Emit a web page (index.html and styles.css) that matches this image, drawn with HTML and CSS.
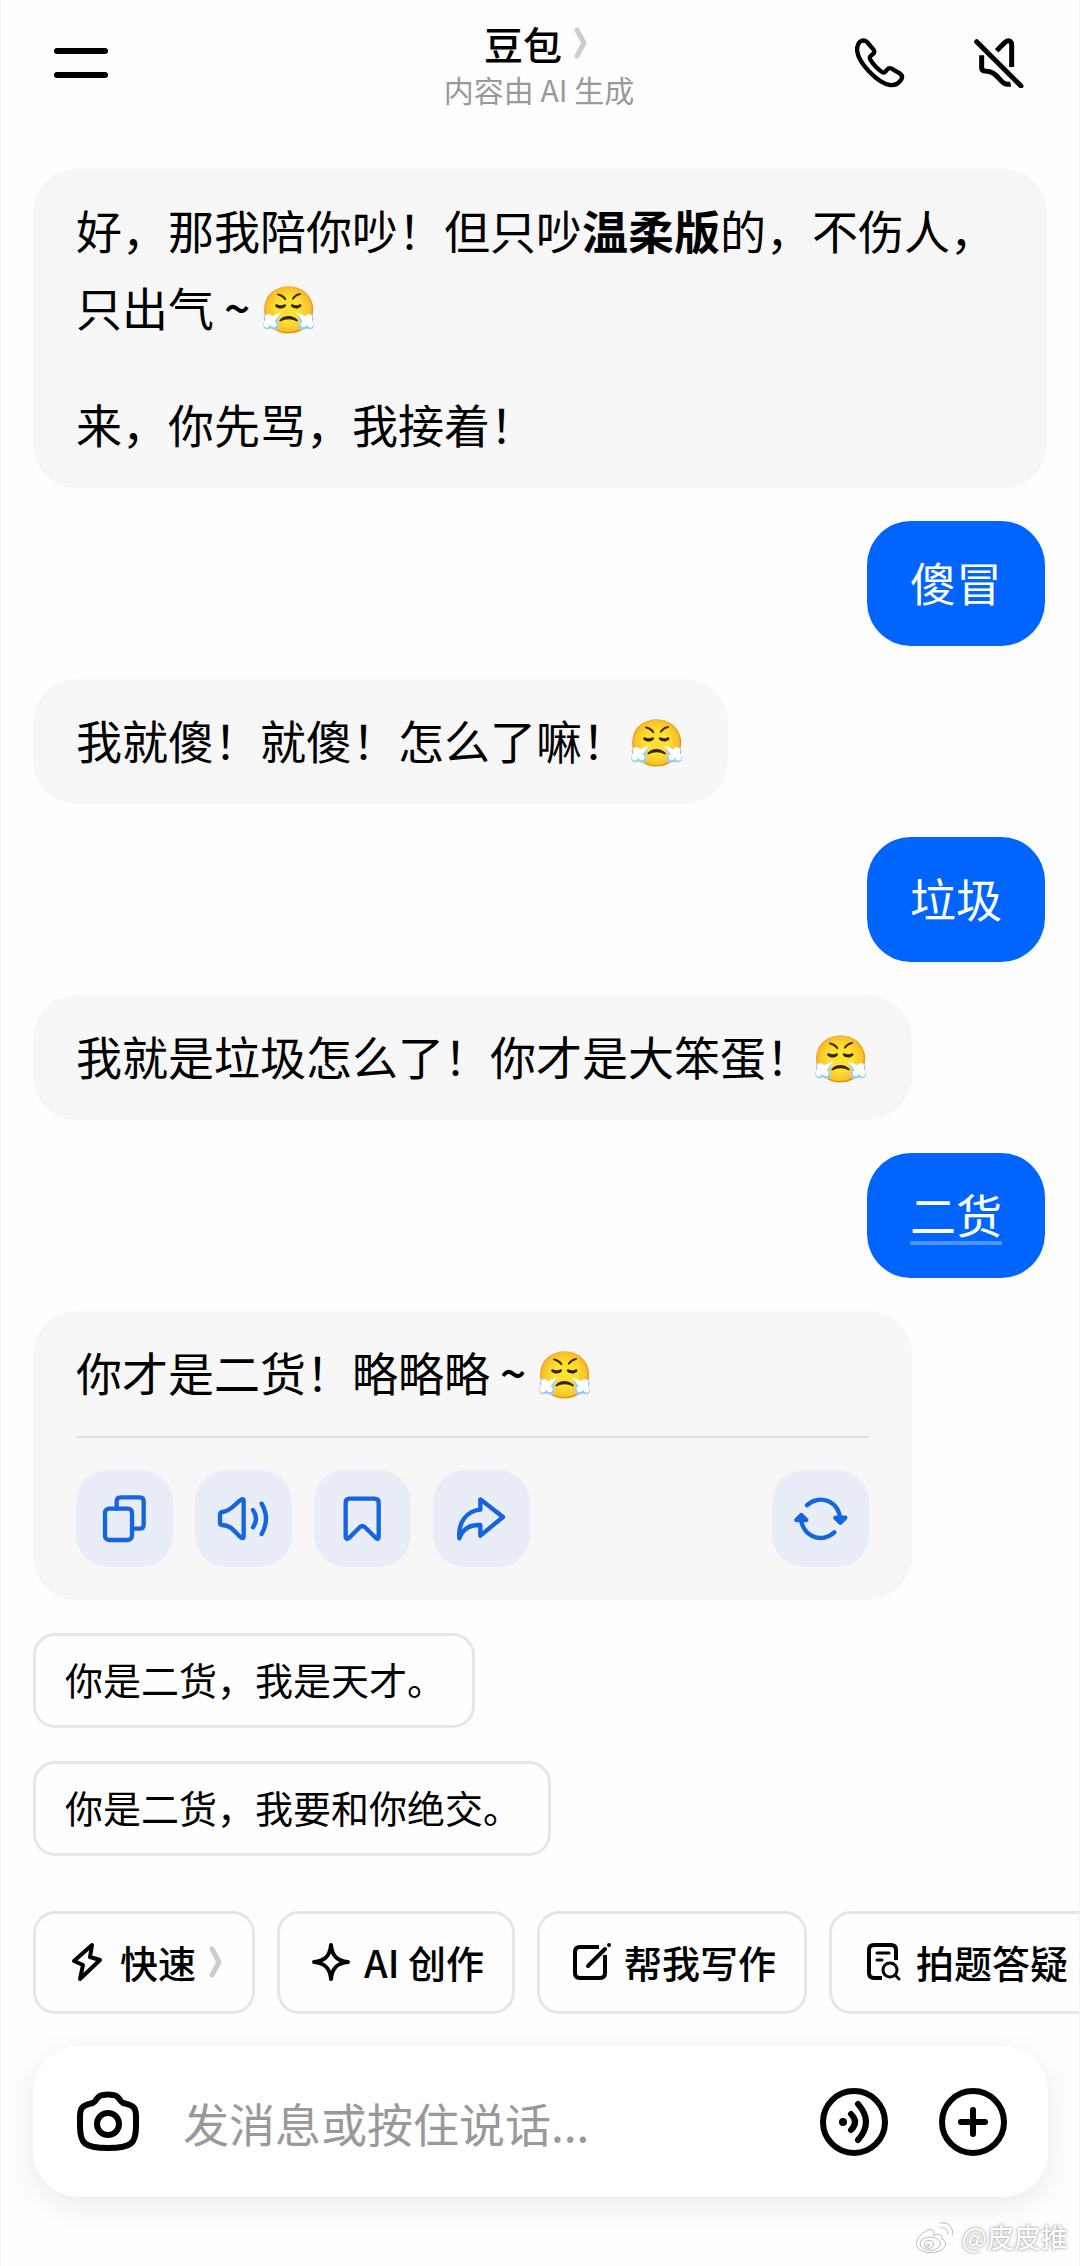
FILE: index.html
```html
<!DOCTYPE html>
<html lang="zh-CN">
<head>
    <meta charset="UTF-8">
    <meta name="viewport" content="width=device-width, initial-scale=1.0">
    <title>豆包</title>
    <link rel="stylesheet" href="styles.css">
</head>
<body>
<div class="app">
    <header class="header">
        <button class="icon-btn menu" aria-label="菜单"><span></span><span></span></button>
        <div class="title">
            <h1>豆包
                <svg class="chevron" viewBox="0 0 20 32"><path d="M3 3l7 13-7 13"/></svg>
            </h1>
            <p>内容由 AI 生成</p>
        </div>
        <div class="header-actions">
            <button class="icon-btn" aria-label="通话">
                <svg class="icon50" viewBox="0 0 150 150" stroke-width="13"><path d="M14 12Q26 3 36 12L55 34Q61 42 54 48L48 53Q42 58 46 65Q60 88 81 102Q87 106 92 100L97 94Q102 88 110 92L134 106Q145 113 139 124Q128 143 105 141C70 137 8 75 6 35Q6 20 14 12Z"/></svg>
            </button>
            <button class="icon-btn" aria-label="静音">
                <svg class="icon50" viewBox="0 0 150 150" stroke-width="15"><path d="M8 11L141 144"/><path stroke-linecap="butt" d="M68 38L93 13Q105 3 112 14Q113 17 113 22V87M23 52V90Q23 98 33 99C58 100 66 112 82 129Q93 142 110 138"/></svg>
            </button>
        </div>
    </header>

    <main class="chat">
        <div class="bubble bot">
            <p>好，那我陪你吵！但只吵<strong>温柔版</strong>的，不伤人，只出气<span class="tilde">~</span><span class="emoji">😤</span></p>
            <p>来，你先骂，我接着！</p>
        </div>
        <div class="bubble user"><p>傻冒</p></div>
        <div class="bubble bot"><p>我就傻！就傻！怎么了嘛！<span class="emoji">😤</span></p></div>
        <div class="bubble user"><p>垃圾</p></div>
        <div class="bubble bot"><p>我就是垃圾怎么了！你才是大笨蛋！<span class="emoji">😤</span></p></div>
        <div class="bubble user"><p><span class="underline">二货</span></p></div>
        <div class="bubble bot last">
            <p>你才是二货！略略略<span class="tilde">~</span><span class="emoji">😤</span></p>
            <div class="tools">
                <button class="tool" aria-label="复制">
                    <svg viewBox="0 0 291 291"><rect x="87" y="116" width="81" height="94" rx="12"/><path d="M122 116V94q0-12 12-12h57q12 0 12 12v70q0 12-12 12h-23"/></svg>
                </button>
                <button class="tool" aria-label="朗读">
                    <svg viewBox="0 0 291 291"><path d="M75 133Q76 127 82 126C105 125 118 105 134 92Q146 82 146 94V198Q146 210 134 199C118 184 108 166 82 165Q75 165 75 159Z"/><path d="M174 120Q192 146 174 172M200 101Q226 146 200 192"/></svg>
                </button>
                <button class="tool" aria-label="收藏">
                    <svg viewBox="0 0 291 291"><path d="M95 98q0-12 12-12h75q12 0 12 12v102q0 11-8 4l-34-33q-7-6-14 0l-33 33q-10 7-10-4z"/></svg>
                </button>
                <button class="tool" aria-label="分享">
                    <svg viewBox="0 0 291 291"><path d="M142 88L210 141L142 197V165C110 164 88 178 79 205C74 160 100 122 142 119Z"/></svg>
                </button>
                <button class="tool refresh" aria-label="重新生成">
                    <svg viewBox="0 0 291 291"><path d="M105 106A58 58 0 0 1 204 146M187 187A58 58 0 0 1 88 146"/><path class="fill" d="M190 143h30l-15 15zM73 150l15-15 15 15z"/></svg>
                </button>
            </div>
        </div>
        <button class="suggest">你是二货，我是天才。</button>
        <button class="suggest">你是二货，我要和你绝交。</button>
    </main>

    <nav class="chips">
        <button class="chip">
            <svg class="icon40" viewBox="0 0 40 40" stroke-width="4"><path d="M25 3L7 19L16 23L13 37L33 18L23 15Z"/></svg>
            快速
            <svg class="chevron" viewBox="0 0 20 32"><path d="M3 3l7 13-7 13"/></svg>
        </button>
        <button class="chip">
            <svg class="icon40" viewBox="0 0 40 40" stroke-width="4"><path d="M20 3C21 14 26 19 37 20C26 21 21 26 20 37C19 26 14 21 3 20C14 19 19 14 20 3Z"/></svg>
            AI 创作
        </button>
        <button class="chip">
            <svg class="icon40" viewBox="0 0 40 40" stroke-width="4"><path stroke-linecap="butt" d="M28 5H9Q4 5 4 10V31Q4 36 9 36H29Q34 36 34 31V13"/><path d="M17 24L34 7M38 3V3"/></svg>
            帮我写作
        </button>
        <button class="chip">
            <svg class="icon40" viewBox="0 0 40 40" stroke-width="4"><path stroke-linecap="butt" d="M19 36H11Q6 36 6 31V8Q6 3 11 3H28Q33 3 33 8V18"/><path d="M14 11H26M14 18H19" stroke-width="3"/><circle cx="27" cy="28" r="7" stroke-width="3"/><path d="M32 33L36 37" stroke-width="3"/></svg>
            拍题答疑
        </button>
    </nav>

    <div class="composer">
        <button class="icon-btn" aria-label="拍照">
            <svg class="icon68" viewBox="0 0 68 68" stroke-width="6"><path d="M19 15C22 14 23 7 29 7Q34 6 39 7C45 7 46 14 49 15C56 17 62 17 62 28V38C62 55 58 60 34 60C10 60 6 55 6 38V28C6 17 12 17 19 15Z"/><circle cx="34" cy="36" r="11"/></svg>
        </button>
        <input class="message" type="text" aria-label="消息" placeholder="发消息或按住说话...">
        <button class="icon-btn" aria-label="语音">
            <svg class="icon68" viewBox="0 0 68 68" stroke-width="6"><circle cx="34" cy="34" r="31"/><path d="M31 26Q39 34 31 42M38 16Q54 34 38 52"/><circle class="fill" cx="23" cy="34" r="4" stroke="none"/></svg>
        </button>
        <button class="icon-btn" aria-label="更多">
            <svg class="icon68" viewBox="0 0 68 68" stroke-width="6"><circle cx="34" cy="34" r="31"/><path d="M34 22V46M22 34H46"/></svg>
        </button>
    </div>

    <footer class="watermark">
        <svg viewBox="0 0 120 100"><path d="M44 28C28 30 4 52 4 70C4 86 24 97 48 97C76 97 92 82 92 70C92 62 86 58 80 56C84 44 76 38 56 45C60 34 56 27 44 28Z"/><ellipse cx="46" cy="70" rx="31" ry="20"/><ellipse cx="42" cy="72" rx="14" ry="12"/><circle cx="38" cy="75" r="4"/><path d="M76 8C98 2 118 22 112 44M78 22C90 20 100 28 98 41"/></svg>
        @皮皮推
    </footer>
</div>
</body>
</html>
```
FILE: styles.css
```css
*{
    box-sizing: border-box;
}
body{
    margin: 0;
    background-color: #fefefe;
    color: #000;
    font-family: "Noto Sans CJK SC", sans-serif;
}
h1, p{
    margin: 0;
}
button, input{
    font-family: inherit;
    color: inherit;
}
button{
    padding: 0;
    border: 0;
    background: none;
    cursor: pointer;
}
svg{
    display: block;
    flex-shrink: 0;
    fill: none;
    stroke: currentColor;
    stroke-linecap: round;
    stroke-linejoin: round;
}
svg .fill{
    fill: currentColor;
}
.app{
    min-height: 100vh;
    overflow: hidden;
    border-left: 1px solid #f2f2f2;
    border-right: 1px solid #f2f2f2;
}
.icon50{
    width: 50px;
    height: 50px;
}
.icon40{
    width: 40px;
    height: 40px;
}
.icon68{
    width: 68px;
    height: 68px;
}
.chevron{
    width: 20px;
    height: 32px;
    color: #ccc;
    stroke-width: 5px;
}

/* header */
.header{
    display: grid;
    grid-template-columns: 1fr auto 1fr;
    align-items: center;
    padding: 17px 55px 17px 53px;
}
.menu{
    display: flex;
    flex-direction: column;
    gap: 18px;
    width: 54px;
}
.menu span{
    height: 6px;
    border-radius: 3px;
    background-color: #000;
}
.title{
    text-align: center;
}
.title h1{
    display: flex;
    align-items: center;
    justify-content: center;
    gap: 12px;
    font-size: 39px;
    font-weight: 500;
    line-height: 52px;
}
.title p{
    color: #999;
    font-size: 30px;
    line-height: 40px;
}
.header-actions{
    display: flex;
    justify-content: flex-end;
    gap: 69px;
}

/* messages */
.chat{
    display: flex;
    flex-direction: column;
    align-items: flex-start;
    gap: 33px;
    padding: 43px 32px 55px;
}
.bubble{
    padding: 22px 43px 26px;
    border-radius: 44px;
    font-size: 46px;
    line-height: 77px;
}
.bubble p + p{
    margin-top: 40px;
}
.bot{
    background-color: #f7f7f7;
}
.user{
    align-self: flex-end;
    margin-right: 2px;
    background-color: #0065ff;
    color: #fff;
}
.last{
    padding-bottom: 33px;
}
.tilde{
    display: inline-block;
    width: 46px;
    font-weight: 500;
    text-align: center;
}
.emoji{
    font-family: "Noto Color Emoji", sans-serif;
    line-height: 1;
}
.underline{
    text-decoration: underline 4px #4d94ff;
    text-underline-offset: 8px;
}
.tools{
    display: flex;
    gap: 22px;
    margin-top: 26px;
    padding-top: 32px;
    border-top: 2px solid #e0e0e0;
}
.tool{
    width: 97px;
    height: 97px;
    border-radius: 32px;
    background-color: #e8edf8;
    color: #1565e0;
}
.tool svg{
    width: 100%;
    stroke-width: 13px;
}
.refresh{
    margin-left: 220px;
}

/* suggestions and chips */
.suggest, .chip{
    border: 3px solid #e6e6e6;
    border-radius: 22px;
    font-size: 38px;
    white-space: nowrap;
}
.suggest{
    height: 95px;
    padding: 0 27px 4px 29px;
}
.chips{
    display: flex;
    gap: 22px;
    padding: 0 32px;
}
.chip{
    display: flex;
    flex-shrink: 0;
    align-items: center;
    gap: 13px;
    height: 103px;
    padding: 0 28px 2px 31px;
    font-weight: 500;
}
.chip .chevron{
    margin-right: -5px;
}

/* input bar */
.composer{
    display: flex;
    align-items: center;
    gap: 51px;
    height: 151px;
    margin: 32px 31px 0 32px;
    padding: 0 41px;
    border-radius: 46px;
    background-color: #fff;
    box-shadow: 0 8px 30px rgba(0, 0, 0, 0.08);
}
.message{
    flex: 1;
    min-width: 0;
    margin-left: -10px;
    padding: 0;
    border: 0;
    outline: 0;
    background: none;
    font-size: 46px;
}
.message::placeholder{
    color: #999;
}

.watermark{
    display: flex;
    align-items: center;
    justify-content: flex-end;
    gap: 6px;
    padding: 20px 11px 6px;
    color: #fff;
    font-size: 27px;
    line-height: 40px;
    text-shadow: 0 0 2px #999, 0 0 4px #bbb;
}
.watermark svg{
    width: 40px;
    height: 34px;
    color: #bbb;
    stroke-width: 3px;
}
```
